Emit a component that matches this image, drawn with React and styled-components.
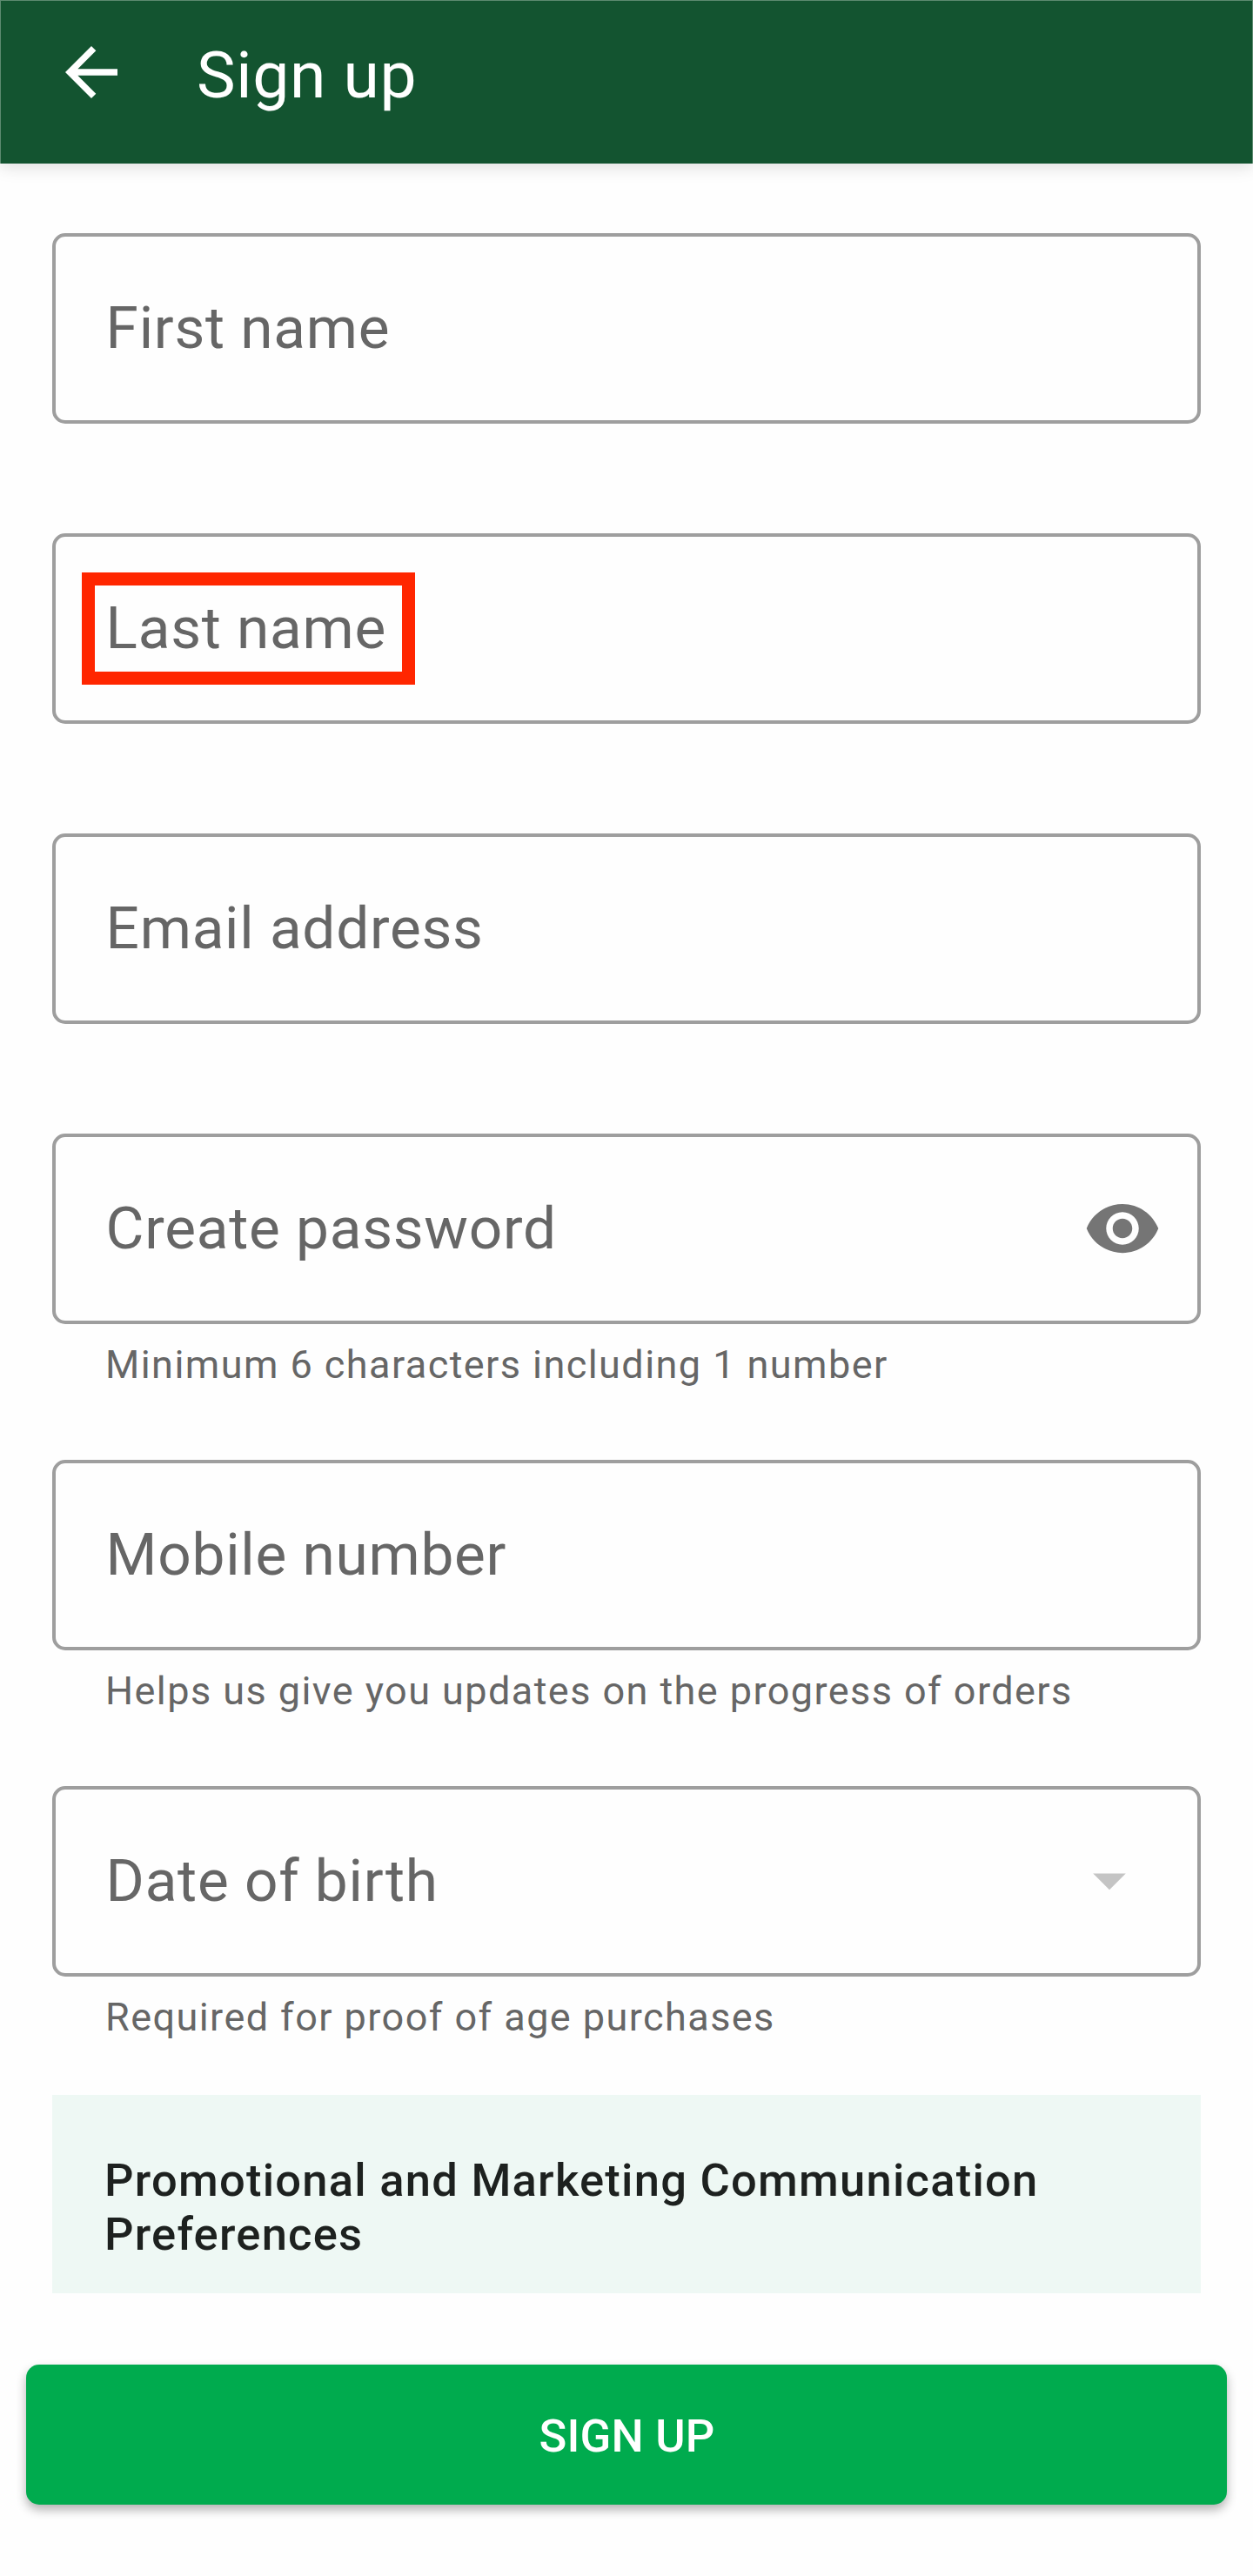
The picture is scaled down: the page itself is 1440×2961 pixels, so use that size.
import React from "react";
import styled, { createGlobalStyle } from "styled-components";

const GlobalStyle = createGlobalStyle`
  *, *::before, *::after { box-sizing: border-box; }
  body { margin: 0; background: #fefefe; font-family: Roboto, "Liberation Sans", sans-serif; }
`;

const Screen = styled.div`
  width: 1440px;
  height: 2961px;
  display: flex;
  flex-direction: column;
  background: #fefefe;
`;

const TopBar = styled.header`
  height: 188px;
  flex: none;
  display: flex;
  align-items: flex-start;
  padding: 37px 0 0 59px;
  background: #135430;
  border: 1px solid #5c8a70;
  border-bottom: 0;
  color: #fff;
  box-shadow: 0 4px 18px rgba(0, 0, 0, 0.13);
`;

const BackButton = styled.button`
  width: 90px;
  height: 90px;
  padding: 0;
  border: 0;
  background: none;
  color: inherit;
  svg { display: block; }
`;

const Title = styled.h1`
  margin: 3px 0 0 76px;
  font-size: 75px;
  line-height: 90px;
  font-weight: 400;
  letter-spacing: 0.0095em;
`;

const Form = styled.form`
  display: flex;
  flex-direction: column;
  padding: 80px 60px 0;
`;

const FieldGroup = styled.div`
  height: ${(p) => (p.$tall ? 375 : 345)}px;
  flex: none;
`;

const FieldBox = styled.label`
  height: 219px;
  display: flex;
  align-items: center;
  justify-content: space-between;
  padding: 0 ${(p) => p.$endPad || 45}px 0 57.6px;
  border: 4px solid #9e9e9e;
  border-radius: 15px;
`;

const FieldLabel = styled.span`
  position: relative;
  margin-bottom: 2px;
  font-size: 67.5px;
  line-height: 80px;
  letter-spacing: 0.011em;
  color: #666;
`;

const Highlight = styled.span`
  position: absolute;
  left: -27.6px;
  top: -24px;
  width: 383px;
  height: 129px;
  border: 15px solid #ff2600;
`;

const Helper = styled.p`
  margin: 20px 0 0 61px;
  font-size: 45px;
  line-height: 53px;
  letter-spacing: 0.032em;
  color: #666;
`;

const Promo = styled.section`
  height: 228px;
  flex: none;
  margin: -20px 0 0;
  padding: 67px 60px 0;
  background: #eef8f4;
`;

const PromoTitle = styled.h2`
  margin: 0;
  font-size: 52.5px;
  line-height: 62px;
  font-weight: 500;
  letter-spacing: 0.0237em;
  color: #1d211f;
`;

const SubmitButton = styled.button`
  height: 161px;
  margin: 82px 30px 0;
  padding: 3px 0 0 1px;
  border: 0;
  border-radius: 15px;
  background: #00ab4e;
  color: #fff;
  font: 500 52.5px/62px Roboto, "Liberation Sans", sans-serif;
  letter-spacing: 0.004em;
  box-shadow: 0 6px 12px rgba(0, 0, 0, 0.3);
`;

const IconSlot = styled.span`
  display: flex;
  margin-bottom: ${(p) => p.$lift}px;
`;

const BackArrow = () => (
  <svg width="90" height="90" viewBox="0 0 24 24" fill="currentColor">
    <path d="M20 11H7.83l5.59-5.59L12 4l-8 8 8 8 1.41-1.41L7.83 13H20v-2z" />
  </svg>
);

const EyeIcon = () => (
  <IconSlot $lift={1}>
    <svg width="90" height="90" viewBox="0 0 24 24" fill="#757575">
      <path d="M12 4.5C7 4.5 2.73 7.61 1 12c1.73 4.39 6 7.5 11 7.5s9.27-3.11 11-7.5c-1.73-4.39-6-7.5-11-7.5zM12 17c-2.76 0-5-2.24-5-5s2.24-5 5-5 5 2.24 5 5-2.24 5-5 5zm0-8c-1.66 0-3 1.34-3 3s1.34 3 3 3 3-1.34 3-3-1.34-3-3-3z" />
    </svg>
  </IconSlot>
);

const CaretIcon = () => (
  <IconSlot $lift={3}>
    <svg width="90" height="90" viewBox="0 0 24 24" fill="#c4c4c4">
      <path d="M7 10l5 5 5-5z" />
    </svg>
  </IconSlot>
);

const fields = [
  { label: "First name" },
  { label: "Last name", highlighted: true },
  { label: "Email address" },
  { label: "Create password", icon: <EyeIcon />, endPad: 41, helper: "Minimum 6 characters including 1 number" },
  { label: "Mobile number", helper: "Helps us give you updates on the progress of orders" },
  { label: "Date of birth", icon: <CaretIcon />, endPad: 56, helper: "Required for proof of age purchases" },
];

export default function App() {
  return (
    <Screen>
      <GlobalStyle />
      <TopBar>
        <BackButton type="button" aria-label="Back">
          <BackArrow />
        </BackButton>
        <Title>Sign up</Title>
      </TopBar>
      <Form>
        {fields.map((f) => (
          <FieldGroup key={f.label} $tall={Boolean(f.helper)}>
            <FieldBox $endPad={f.endPad}>
              <FieldLabel>
                {f.label}
                {f.highlighted && <Highlight />}
              </FieldLabel>
              {f.icon}
            </FieldBox>
            {f.helper && <Helper>{f.helper}</Helper>}
          </FieldGroup>
        ))}
        <Promo>
          <PromoTitle>Promotional and Marketing Communication Preferences</PromoTitle>
        </Promo>
      </Form>
      <SubmitButton type="button">SIGN UP</SubmitButton>
    </Screen>
  );
}
